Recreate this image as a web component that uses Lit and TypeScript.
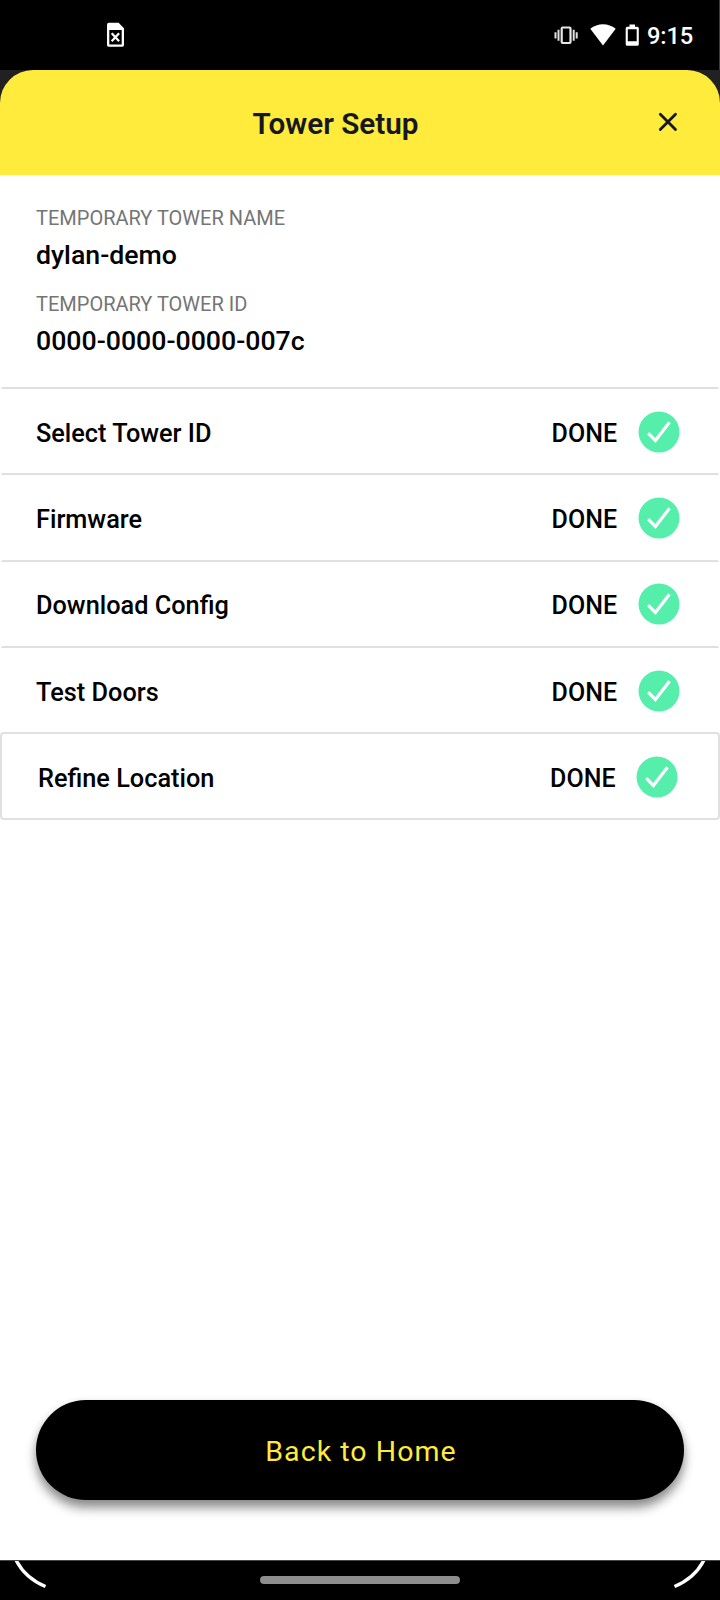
import { LitElement, html, css } from "lit";
import { customElement, property } from "lit/decorators.js";

@customElement("status-bar")
class StatusBar extends LitElement {
  static styles = css`
    :host { display: block; }
    .bar { box-sizing: border-box; height: 70px; background: #000; border-right: 1px solid #3c3c3c; display: flex; justify-content: space-between; padding-left: 107px; padding-right: 26px; }
    svg { display: block; }
    .sim { margin-top: 22px; }
    .right { display: flex; }
    .vibrate { margin-top: 26px; }
    .wifi { margin-top: 24px; margin-left: 12px; }
    .battery { margin-top: 24px; margin-left: 9px; }
    .time { color: #fff; font: 500 23.7px/28px Roboto, sans-serif; margin-top: 22px; margin-left: 7px; width: 46px; white-space: nowrap; letter-spacing: -0.1px; }
  `;
  render() {
    return html`<div class="bar">
      <svg class="sim" width="18" height="25" viewBox="0 0 18 25">
        <path fill="#fff" fill-rule="evenodd" d="M2 .7h9.600L17 6.200v16.900a1.600 1.600 0 0 1-1.600 1.600H1.600A1.600 1.600 0 0 1 0 23.100V2.700a2 2 0 0 1 2-2ZM2.300 8v14.400h12.400V8Z"/>
        <path d="M4.700 11.200l7.400 8M12.100 11.200l-7.400 8" stroke="#fff" stroke-width="2.200" fill="none"/>
      </svg>
      <div class="right">
        <svg class="vibrate" width="24" height="19" viewBox="0 0 24 19">
          <rect x="7.700" y="1.500" width="8.800" height="15.500" rx="1" fill="none" stroke="#e8e8e8" stroke-width="2.200"/>
          <path d="M4.500 3.800v11M19.700 3.800v11M1.500 6.200v6.200M22.700 6.200v6.200" stroke="#e0e0e0" stroke-width="2"/>
        </svg>
        <svg class="wifi" width="26" height="22" viewBox="0 0 26 22"><path fill="#fff" d="M13 21.500.3 4.700C4 1.700 8.300.2 13 .2s9 1.500 12.700 4.500Z"/></svg>
        <svg class="battery" width="15" height="22" viewBox="0 0 15 22">
          <path fill="#fff" fill-rule="evenodd" d="M4.500.5h5.500v2.300h2.300a1.500 1.500 0 0 1 1.500 1.500v15.900a1.500 1.500 0 0 1-1.500 1.500H2.200a1.500 1.500 0 0 1-1.500-1.500V4.300a1.500 1.500 0 0 1 1.500-1.500h2.300ZM2.800 5.300v12h8.900v-12Z"/>
        </svg>
        <span class="time">9:15</span>
      </div>
    </div>`;
  }
}

@customElement("setup-step")
class SetupStep extends LitElement {
  @property() label = "";
  @property() status = "DONE";
  static styles = css`
    :host { display: block; box-sizing: border-box; height: 86.3px; margin: 0 1px; padding: 0 39.5px 0 35px; border-top: 2px solid #e0e0e0; border-radius: 2px; }
    :host([outlined]) { margin: 0; height: 88px; border: 2px solid #e0e0e0; border-radius: 4px; padding: 0 40px 0 36px; }
    .row { display: flex; align-items: center; height: 85.3px; color: #000; font: 500 25px/30px Roboto, sans-serif; }
    .label { flex: 1; padding-top: 4px; font-size: 25.3px; }
    .status { padding-top: 4px; margin-right: 20.5px; }
    svg { display: block; }
  `;
  render() {
    return html`<div class="row">
      <span class="label">${this.label}</span>
      <span class="status">${this.status}</span>
      <svg width="42" height="42" viewBox="0 0 42 42">
        <circle cx="21" cy="21" r="20.500" fill="#55efab"/>
        <path d="M10.200 22.200l7.200 7.400L31.500 11.300" fill="none" stroke="#fff" stroke-width="3.200"/>
      </svg>
    </div>`;
  }
}

@customElement("app-root")
class AppRoot extends LitElement {
  static styles = css`
    :host { display: block; font-family: Roboto, sans-serif; }
    .screen { display: flex; flex-direction: column; height: 1600px; background: #fff; overflow: hidden; }
    .top { background: #212121; }
    .header { box-sizing: border-box; height: 105px; border-radius: 33px 33px 0 0; background: #ffeb3c; display: flex; align-items: center; color: #16181f; padding-right: 42px; }
    .title { flex: 1; text-align: center; padding: 3px 0 0 13px; font-weight: 600; font-size: 29.7px; line-height: 34px; }
    .close { display: block; margin-bottom: 2px; }
    .info { box-sizing: border-box; height: 212.2px; padding: 31px 36px 0; }
    .caption { font-size: 20px; line-height: 24px; color: #757575; }
    .value { font-size: 26.7px; line-height: 30px; font-weight: 500; color: #000; margin: 10px 0 22px; }
    .footer { margin-top: auto; padding: 0 36px 60px; }
    .home { display: block; width: 100%; height: 100px; border: 0; border-radius: 50px; background: #000; color: #ffeb3c; font: 400 28.5px/34px Roboto, sans-serif; letter-spacing: 1.05px; padding: 4px 0 0 2px; box-shadow: 0 8px 11px rgba(0,0,0,.42), 0 2px 8px rgba(0,0,0,.1); }
    .nav { box-sizing: border-box; height: 40px; background: #000; border-top: 1px solid #444; display: flex; justify-content: space-between; align-items: flex-start; }
    .handle { width: 200px; height: 8px; margin-top: 15px; border-radius: 4px; background: #8d8d8d; }
    .nav svg { display: block; }
    .flip { transform: scaleX(-1); }
  `;
  private steps = ["Select Tower ID", "Firmware", "Download Config", "Test Doors", "Refine Location"];
  private corner(cls: string) {
    return html`<svg class=${cls} width="60" height="39" viewBox="0 0 60 39">
      <path d="M15.500 -2C21.500 10.500 31 19.500 45.500 25.500" fill="none" stroke="#fff" stroke-width="3.400"/>
    </svg>`;
  }
  render() {
    return html`<div class="screen">
      <status-bar></status-bar>
      <div class="top"><div class="header">
        <div class="title">Tower Setup</div>
        <svg class="close" width="20" height="20" viewBox="0 0 20 20"><path d="M2.300 2.200l15.200 15.400M17.500 2.200L2.300 17.600" stroke="#16181f" stroke-width="2.800" stroke-linecap="round"/></svg>
      </div></div>
      <div class="info">
        <div class="caption">TEMPORARY TOWER NAME</div>
        <div class="value">dylan-demo</div>
        <div class="caption">TEMPORARY TOWER ID</div>
        <div class="value">0000-0000-0000-007c</div>
      </div>
      <div>
        ${this.steps.map((s, i) => html`<setup-step .label=${s} ?outlined=${i === this.steps.length - 1}></setup-step>`)}
      </div>
      <div class="footer"><button class="home">Back to Home</button></div>
      <div class="nav">${this.corner("")}<div class="handle"></div>${this.corner("flip")}</div>
    </div>`;
  }
}
